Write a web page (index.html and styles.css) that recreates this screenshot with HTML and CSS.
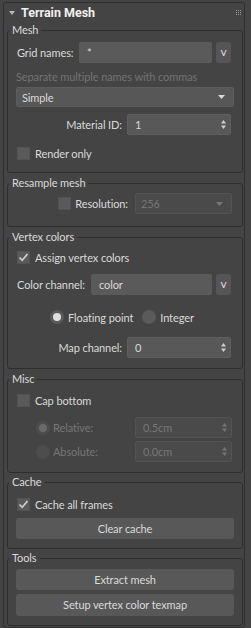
FILE: index.html
```html
<!DOCTYPE html>
<html lang="en">
<head>
    <meta charset="UTF-8">
    <title>Terrain Mesh</title>
    <link rel="stylesheet" href="styles.css">
</head>
<body>
    <div class="rollout">
        <div class="rollout-head">
            <span class="caret"></span>
            <span class="rollout-title">Terrain Mesh</span>
            <svg class="grip" width="5" height="5" viewBox="0 0 5 5">
                <rect x="0" y="0" width="1" height="1"/><rect x="2" y="0" width="1" height="1"/><rect x="4" y="0" width="1" height="1"/>
                <rect x="0" y="2" width="1" height="1"/><rect x="2" y="2" width="1" height="1"/><rect x="4" y="2" width="1" height="1"/>
                <rect x="0" y="4" width="1" height="1"/><rect x="2" y="4" width="1" height="1"/><rect x="4" y="4" width="1" height="1"/>
            </svg>
        </div>
        <div class="rollout-body">

            <!-- Mesh -->
            <fieldset class="group group-mesh">
                <legend>Mesh</legend>
                <div class="row row-grid">
                    <span class="lbl">Grid names:</span>
                    <div class="edit edit-name">*</div>
                    <div class="btn-v">v</div>
                </div>
                <div class="hint">Separate multiple names with commas</div>
                <div class="combo combo-mode">
                    <span>Simple</span>
                    <svg class="combo-arrow" width="7" height="4" viewBox="0 0 7 4"><polygon points="0,0 7,0 3.5,4"/></svg>
                </div>
                <div class="row row-right row-matid">
                    <span class="lbl">Material ID:</span>
                    <div class="spin spin-wide">
                        <span>1</span>
                        <svg class="spin-arrows" width="5" height="9" viewBox="0 0 5 9"><polygon points="0,3.5 2.5,0 5,3.5"/><polygon points="0,5.5 2.5,9 5,5.5"/></svg>
                    </div>
                </div>
                <div class="row row-check row-render">
                    <span class="check"></span>
                    <span class="check-text">Render only</span>
                </div>
            </fieldset>

            <!-- Resample mesh -->
            <fieldset class="group group-resample">
                <legend>Resample mesh</legend>
                <div class="row row-right row-res">
                    <span class="check"></span>
                    <span class="lbl lbl-res">Resolution:</span>
                    <div class="combo combo-res disabled">
                        <span>256</span>
                        <svg class="combo-arrow" width="7" height="4" viewBox="0 0 7 4"><polygon points="0,0 7,0 3.5,4"/></svg>
                    </div>
                </div>
            </fieldset>

            <!-- Vertex colors -->
            <fieldset class="group group-vertex">
                <legend>Vertex colors</legend>
                <div class="row row-check row-assign">
                    <span class="check checked">
                        <svg width="13" height="13" viewBox="0 0 13 13"><path d="M2.5 6.5 L5.2 9.3 L10.5 3"/></svg>
                    </span>
                    <span class="check-text">Assign vertex colors</span>
                </div>
                <div class="row row-grid row-channel">
                    <span class="lbl">Color channel:</span>
                    <div class="edit edit-channel">color</div>
                    <div class="btn-v">v</div>
                </div>
                <div class="row row-radios">
                    <span class="radio on"></span>
                    <span class="radio-text">Floating point</span>
                    <span class="radio radio-second"></span>
                    <span class="radio-text">Integer</span>
                </div>
                <div class="row row-right row-map">
                    <span class="lbl">Map channel:</span>
                    <div class="spin spin-wide">
                        <span>0</span>
                        <svg class="spin-arrows" width="5" height="9" viewBox="0 0 5 9"><polygon points="0,3.5 2.5,0 5,3.5"/><polygon points="0,5.5 2.5,9 5,5.5"/></svg>
                    </div>
                </div>
            </fieldset>

            <!-- Misc -->
            <fieldset class="group group-misc">
                <legend>Misc</legend>
                <div class="row row-check row-cap">
                    <span class="check"></span>
                    <span class="check-text">Cap bottom</span>
                </div>
                <div class="row row-offset row-relative">
                    <span class="radio on disabled"></span>
                    <span class="radio-text disabled">Relative:</span>
                    <div class="spin spin-narrow disabled">
                        <span>0.5cm</span>
                        <svg class="spin-arrows" width="5" height="9" viewBox="0 0 5 9"><polygon points="0,3.5 2.5,0 5,3.5"/><polygon points="0,5.5 2.5,9 5,5.5"/></svg>
                    </div>
                </div>
                <div class="row row-offset row-absolute">
                    <span class="radio disabled"></span>
                    <span class="radio-text disabled">Absolute:</span>
                    <div class="spin spin-narrow disabled">
                        <span>0.0cm</span>
                        <svg class="spin-arrows" width="5" height="9" viewBox="0 0 5 9"><polygon points="0,3.5 2.5,0 5,3.5"/><polygon points="0,5.5 2.5,9 5,5.5"/></svg>
                    </div>
                </div>
            </fieldset>

            <!-- Cache -->
            <fieldset class="group group-cache">
                <legend>Cache</legend>
                <div class="row row-check row-cacheall">
                    <span class="check checked">
                        <svg width="13" height="13" viewBox="0 0 13 13"><path d="M2.5 6.5 L5.2 9.3 L10.5 3"/></svg>
                    </span>
                    <span class="check-text">Cache all frames</span>
                </div>
                <div class="button btn-clear">Clear cache</div>
            </fieldset>

            <!-- Tools -->
            <fieldset class="group group-tools">
                <legend>Tools</legend>
                <div class="button btn-extract">Extract mesh</div>
                <div class="button btn-setup">Setup vertex color texmap</div>
            </fieldset>

        </div>
    </div>
</body>
</html>
```

FILE: styles.css
```css
body {
    margin: 0;
    background-color: #444444;
    font-family: "Segoe UI", Lato, Roboto, "Liberation Sans", sans-serif;
    font-size: 11px;
    letter-spacing: -0.1px;
    color: #dadada;
}
.rollout {
    box-sizing: border-box;
    width: 242px;
    height: 626px;
    margin: 2px 0 0 3px;
    border: 1px solid #2f2f2f;
    border-radius: 3px;
    background-color: #444444;
}
.rollout-head {
    display: flex;
    align-items: center;
    height: 19px;
    padding: 0 3px 0 5px;
}
.caret {
    width: 0;
    height: 0;
    border-left: 3px solid transparent;
    border-right: 3px solid transparent;
    border-top: 4px solid #b8b8b8;
}
.rollout-title {
    margin-left: 6px;
    font-family: Roboto, "Liberation Sans", sans-serif;
    font-weight: bold;
    font-size: 12.5px;
    letter-spacing: 0;
    color: #f0f0f0;
}
.grip {
    margin-left: auto;
    fill: #9a9a9a;
}
.rollout-body {
    padding: 0 1px 0 3px;
}

/* group boxes */
.group {
    margin: 3px 0 0 0;
    padding: 0 8px;
    border: 1px solid #2e2e2e;
    border-radius: 3px;
    min-width: 0;
}
.group legend {
    margin-left: -7px;
    padding: 0 3px;
    line-height: 14px;
    color: #dadada;
}
.group-mesh { margin-top: 1px; padding-bottom: 12px; }
.group-resample { padding-bottom: 12px; }
.group-vertex { padding-bottom: 10px; }
.group-misc { padding-bottom: 10px; }
.group-cache { margin-top: 2px; padding-bottom: 9px; }
.group-tools { margin-top: 2px; padding-bottom: 9px; }

.row {
    display: flex;
    align-items: center;
    height: 21px;
}
.row-right {
    justify-content: flex-end;
    padding-right: 3px;
}
.lbl {
    white-space: nowrap;
}

/* edits */
.row-grid {
    padding-right: 3px;
    margin-top: 5px;
}
.row-grid .lbl {
    flex: 1;
    padding-left: 1px;
}
.edit {
    box-sizing: border-box;
    height: 21px;
    line-height: 21px;
    padding-left: 8px;
    background-color: #5a5a5a;
    border-radius: 2px;
}
.edit-name { width: 133px; }
.edit-channel { width: 121px; }
.btn-v {
    box-sizing: border-box;
    width: 15px;
    height: 21px;
    margin-left: 4px;
    line-height: 20px;
    text-align: center;
    font-size: 12px;
    background-color: #555555;
    border-radius: 3px;
}

.hint {
    margin-top: 6px;
    height: 16px;
    line-height: 16px;
    color: #737373;
    white-space: nowrap;
}

/* combos */
.combo {
    box-sizing: border-box;
    display: flex;
    align-items: center;
    height: 20px;
    padding: 0 8px 0 5px;
    background-color: #575757;
    border: 1px solid #5d5d5d;
    border-radius: 2px;
}
.combo-arrow {
    margin-left: auto;
    fill: #d8d8d8;
}
.combo-mode {
    margin-top: 2px;
}
.combo-res {
    width: 97px;
    height: 21px;
}
.combo.disabled {
    background-color: #4a4a4a;
    border-color: #535353;
    color: #777777;
}
.combo.disabled .combo-arrow {
    fill: #777777;
}

/* spinners */
.spin {
    box-sizing: border-box;
    display: flex;
    align-items: center;
    height: 21px;
    padding: 0 4px 0 7px;
    background-color: #585858;
    border: 1px solid #5e5e5e;
    border-radius: 2px;
}
.spin-arrows {
    margin-left: auto;
    fill: #cfcfcf;
}
.spin-wide {
    width: 104px;
    margin-left: 5px;
}
.spin-narrow {
    width: 97px;
    margin-left: auto;
}
.spin.disabled {
    background-color: #4a4a4a;
    border-color: #535353;
    color: #777777;
}
.spin.disabled .spin-arrows {
    fill: #747474;
}

.row-matid { margin-top: 7px; }
.row-map { margin-top: 13px; }

/* checkboxes */
.row-check {
    height: 13px;
    padding-left: 1px;
}
.check {
    box-sizing: border-box;
    display: block;
    width: 13px;
    height: 13px;
    background-color: #5a5a5a;
    border: 1px solid #535353;
}
.check svg {
    display: block;
    margin: -1px;
    fill: none;
    stroke: #cfcfcf;
    stroke-width: 1.7;
}
.check-text {
    margin-left: 5px;
    white-space: nowrap;
}
.row-render { margin-top: 12px; }
.row-assign { margin-top: 7px; }
.row-cap { margin-top: 8px; }
.row-cacheall { margin-top: 9px; }

.row-res {
    margin-top: 3px;
    padding-right: 2px;
}
.lbl-res {
    margin: 0 7px 0 4px;
}
.row-channel { margin-top: 10px; }

/* radios */
.radio {
    box-sizing: border-box;
    position: relative;
    width: 14px;
    height: 14px;
    border-radius: 50%;
    background-color: #5a5a5a;
}
.radio.on::after {
    content: "";
    position: absolute;
    left: 3px;
    top: 3px;
    width: 8px;
    height: 8px;
    border-radius: 50%;
    background-color: #e0e0e0;
}
.radio.disabled {
    background-color: #4d4d4d;
}
.radio.on.disabled::after {
    background-color: #6a6a6a;
}
.radio-text {
    margin-left: 4px;
    white-space: nowrap;
}
.radio-text.disabled {
    color: #777777;
}
.row-radios {
    height: 14px;
    margin-top: 15px;
    padding-left: 34px;
}
.radio-second {
    margin-left: 9px;
}
.row-offset {
    padding: 0 2px 0 20px;
}
.row-offset .radio-text {
    margin-left: 3px;
}
.row-relative { margin-top: 10px; }
.row-absolute { margin-top: 3px; }

/* push buttons */
.button {
    height: 21px;
    line-height: 21px;
    text-align: center;
    background-color: #585858;
    border-radius: 3px;
}
.btn-clear { margin-top: 7px; }
.btn-extract { margin-top: 4px; }
.btn-setup { margin-top: 4px; height: 22px; line-height: 22px; }
```
